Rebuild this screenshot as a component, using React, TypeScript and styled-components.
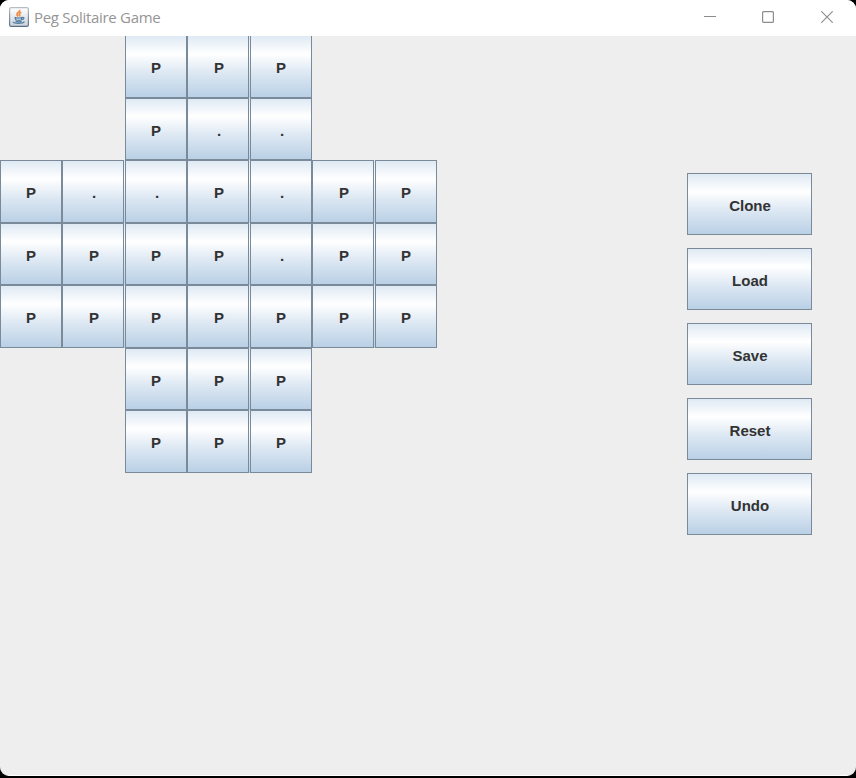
import React from 'react';
import styled, { createGlobalStyle } from 'styled-components';

const GlobalStyle = createGlobalStyle`
  * { box-sizing: border-box; }
  html, body { margin: 0; padding: 0; background: #000; }
  body { overflow: hidden; }
`;

const Backdrop = styled.div`
  width: 856px;
  height: 778px;
  background: #000;
`;

const Window = styled.div`
  display: flex;
  flex-direction: column;
  width: 856px;
  height: 776px;
  overflow: hidden;
  border-radius: 9px;
  border-bottom: 1px solid #fff;
  background: #eee;
  font-family: 'Liberation Sans', Arial, sans-serif;
`;

const TitleBar = styled.header`
  display: flex;
  align-items: center;
  flex: 0 0 36px;
  height: 36px;
  padding-left: 9px;
  background: #fff;
`;

const AppIcon = styled.svg`
  display: block;
  width: 20px;
  height: 20px;
  margin-top: -2px;
`;

const Title = styled.h1`
  flex: 1;
  margin: -3px 0 0 5px;
  font: 400 15px/20px 'Open Sans', 'Noto Sans', sans-serif;
  letter-spacing: -0.3px;
  color: #959595;
`;

const WindowControls = styled.div`
  display: flex;
  margin: -2px 0 0;
`;

const ControlButton = styled.button<{ $width: number }>`
  display: flex;
  align-items: center;
  justify-content: center;
  width: ${({ $width }) => $width}px;
  height: 34px;
  padding: 0;
  border: 0;
  background: none;

  svg { display: block; }
`;

const Content = styled.main`
  display: flex;
  flex: 1;
  align-items: flex-start;
  justify-content: space-between;
  min-height: 0;
  overflow: hidden;
`;

const Board = styled.div`
  display: grid;
  grid-template-columns: 62px 63px 62px 63px 62px 63px 62px;
  grid-template-rows: 63px 62px 63px 62px 63px 62px 63px;
  margin-top: -1px;
`;

const metalFace = 'linear-gradient(#dde8f3 0%, #fff 30%, #dde8f3 60%, #b8cfe5 100%)';

const MetalButton = styled.button`
  display: flex;
  align-items: center;
  justify-content: center;
  padding: 3px 0 0 1px;
  border: 1px solid #7a8a99;
  background: ${metalFace} border-box;
  color: #333;
  font: 700 15px/17px 'Liberation Sans', Arial, sans-serif;
`;

const Slot = styled.div<{ $seam: boolean }>`
  display: flex;
  padding-right: ${({ $seam }) => ($seam ? '1px' : '0')};
  background: ${metalFace};
`;

const PegButton = styled(MetalButton)<{ $tall: boolean; $nudge: boolean }>`
  width: 62px;
  height: 100%;
  padding: ${({ $tall }) => ($tall ? 2 : 3)}px 0 0 ${({ $nudge }) => ($nudge ? 2 : 0)}px;
`;

const Gap = styled.div``;

const Actions = styled.nav`
  display: grid;
  gap: 13px;
  margin: 137px 44px 0 0;
`;

const ActionButton = styled(MetalButton)`
  width: 125px;
  height: 62px;
`;

const ROWS = ['  PPP  ', '  P..  ', 'P..P.PP', 'PPPP.PP', 'PPPPPPP', '  PPP  ', '  PPP  '];
const ACTIONS = ['Clone', 'Load', 'Save', 'Reset', 'Undo'];

function JavaIcon() {
  return (
    <AppIcon viewBox="0 0 20 20" fill="none">
      <defs>
        <linearGradient id="tile" x1="0" y1="0" x2="0" y2="1">
          <stop stopColor="#fff" />
          <stop offset="1" stopColor="#cbd2d7" />
        </linearGradient>
        <linearGradient id="tileEdge" x1="0" y1="0" x2="0" y2="1">
          <stop stopColor="#b5bec5" />
          <stop offset="1" stopColor="#566f85" />
        </linearGradient>
      </defs>
      <rect x=".6" y=".6" width="18.8" height="18.8" rx="1.6" fill="url(#tile)" stroke="url(#tileEdge)" strokeWidth="1.2" />
      <path d="M10.6 2.8c1 2.2-3.7 3.1-2.6 5.1.3.6.8 1 1.2 1.4M12.4 5.2c-1.8.8-2.8 1.6-1.8 2.7.4.5 0 1-.4 1.4" stroke="#ee8b45" strokeWidth="1.7" />
      <path d="M5.6 10.4c1.7.9 5.8.9 7.6 0M6.1 10.7c.1 1 .5 1.7 1 2.3 1.6.5 3.6.5 5 0 .4-.6.8-1.3.9-2.3M13.2 10.4c2.4-.4 2.3 2-.7 2.1M4.3 14.8c-.6 1.9 9.6 2.3 11.2-.1M6.5 14.4c2 .6 4.2.6 6.2 0" stroke="#547fa5" strokeWidth="1.3" />
    </AppIcon>
  );
}

export default function App() {
  return (
    <Backdrop>
      <GlobalStyle />
      <Window>
        <TitleBar>
          <JavaIcon />
          <Title>Peg Solitaire Game</Title>
          <WindowControls>
            <ControlButton $width={56} aria-label="Minimize">
              <svg width="12" height="12"><path d="M0 5.5h12" stroke="#8c8c8c" /></svg>
            </ControlButton>
            <ControlButton $width={60} aria-label="Maximize">
              <svg width="12" height="12" fill="none"><rect x=".6" y=".6" width="10.8" height="10.8" rx="1" stroke="#8c8c8c" strokeWidth="1.2" /></svg>
            </ControlButton>
            <ControlButton $width={58} aria-label="Close">
              <svg width="12" height="12"><path d="M.3.3l11.4 11.4M11.7.3L.3 11.7" stroke="#8c8c8c" strokeWidth="1.1" /></svg>
            </ControlButton>
          </WindowControls>
        </TitleBar>
        <Content>
          <Board>
            {ROWS.flatMap((row, r) =>
              row.split('').map((mark, c) =>
                mark === ' ' ? (
                  <Gap key={`${r}-${c}`} />
                ) : (
                  <Slot key={`${r}-${c}`} $seam={c % 2 === 1}>
                    <PegButton $tall={r % 2 === 0} $nudge={c % 2 === 1 || mark === '.'}>
                      {mark}
                    </PegButton>
                  </Slot>
                ),
              ),
            )}
          </Board>
          <Actions>
            {ACTIONS.map((label) => (
              <ActionButton key={label}>{label}</ActionButton>
            ))}
          </Actions>
        </Content>
      </Window>
    </Backdrop>
  );
}
